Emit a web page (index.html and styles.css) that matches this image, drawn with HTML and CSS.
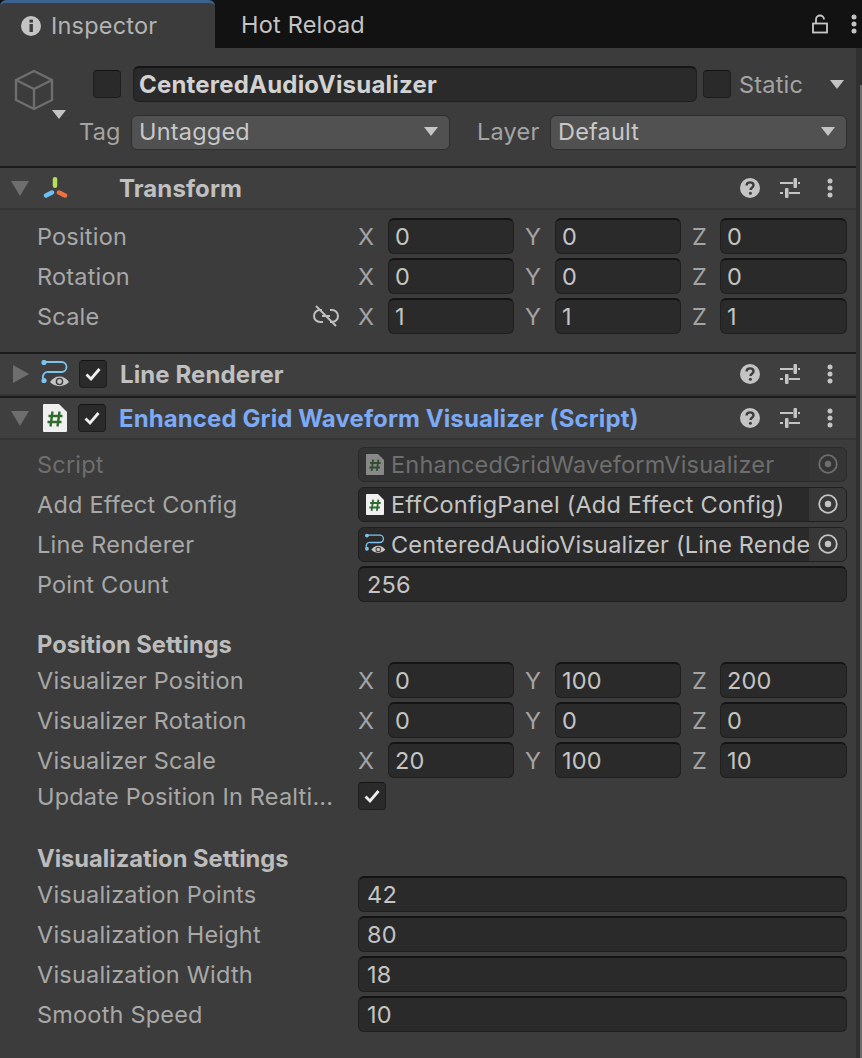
FILE: index.html
```html
<!DOCTYPE html>
<html lang="en">
<head>
  <meta charset="UTF-8" />
  <meta name="viewport" content="width=device-width, initial-scale=1.0" />
  <title>Inspector</title>
  <link rel="stylesheet" href="styles.css">
</head>
<body>
  <svg class="defs" width="0" height="0">
    <symbol id="help" viewBox="0 0 20 20">
      <circle cx="10" cy="10" r="10" fill="#c4c4c4"/>
      <path d="M6.600 7.600c0-2 1.500-3.200 3.500-3.200s3.400 1.100 3.400 2.900c0 2.500-3 2.500-3 4.700" fill="none" stroke="#3e3e3e" stroke-width="2.400"/>
      <circle cx="10.400" cy="15.200" r="1.500" fill="#3e3e3e"/>
    </symbol>
    <symbol id="sliders" viewBox="0 0 20 20">
      <path d="M0 5h13M18 5h2M0 15h3M9 15h11" stroke="#c4c4c4" stroke-width="2" fill="none"/>
      <rect x="13.500" y="0" width="3.500" height="10" rx="1" fill="#c4c4c4"/>
      <rect x="5" y="10" width="3.500" height="10" rx="1" fill="#c4c4c4"/>
    </symbol>
    <symbol id="dots" viewBox="0 0 6 20">
      <circle cx="3" cy="3" r="2.500" fill="#c4c4c4"/>
      <circle cx="3" cy="10" r="2.500" fill="#c4c4c4"/>
      <circle cx="3" cy="17" r="2.500" fill="#c4c4c4"/>
    </symbol>
    <symbol id="check" viewBox="0 0 16 14">
      <path d="M1.500 7.500l4.500 4.500 8.500-10" fill="none" stroke="#eee" stroke-width="2.800"/>
    </symbol>
    <symbol id="target" viewBox="0 0 20 20">
      <circle cx="10" cy="10" r="8.800" fill="none" stroke="currentColor" stroke-width="1.800"/>
      <circle cx="10" cy="10" r="3.200" fill="currentColor"/>
    </symbol>
    <symbol id="line" viewBox="0 0 30 28">
      <path d="M4 2h17.500a5 5 0 0 1 0 10H9a5 5 0 0 0-5 8" fill="none" stroke="#7cc4ee" stroke-width="1.800"/>
      <circle cx="4" cy="2.500" r="2.600" fill="#7cc4ee"/>
      <circle cx="4" cy="20.500" r="2.600" fill="#7cc4ee"/>
      <path d="M10 22c4.500-7.500 14.500-7.500 19 0-4.500 5.500-14.500 5.500-19 0z" fill="#c4c4c4"/>
      <circle cx="19.500" cy="21.500" r="3.800" fill="#3e3e3e"/>
      <circle cx="19.500" cy="21.500" r="2.400" fill="#c4c4c4"/>
    </symbol>
    <symbol id="script" viewBox="0 0 24 28">
      <path d="M1 0h15l8 8v19a1 1 0 0 1-1 1H1a1 1 0 0 1-1-1V1a1 1 0 0 1 1-1z" fill="#f0f0f0"/>
      <path d="M9.500 7.500l-2 15M16.500 7.500l-2 15M5.500 12h14M4.500 18h14" fill="none" stroke="#2f6b2f" stroke-width="2.400"/>
    </symbol>
  </svg>

  <div class="tabbar">
    <div class="tab active">
      <svg class="tab-info" viewBox="0 0 20 20">
        <circle cx="10" cy="10" r="10" fill="#c4c4c4"/>
        <rect x="8.500" y="8" width="3.400" height="8" fill="#3c3c3c"/>
        <rect x="8.500" y="3.600" width="3.400" height="3" fill="#3c3c3c"/>
      </svg>
      Inspector
    </div>
    <div class="tab">Hot Reload</div>
    <div class="tab-actions">
      <svg class="lock" viewBox="0 0 16 20">
        <rect x="1" y="9.500" width="14" height="9" fill="none" stroke="#c8c8c8" stroke-width="1.800"/>
        <path d="M4 9.500V5.500a4 4 0 0 1 8 0" fill="none" stroke="#c8c8c8" stroke-width="1.800"/>
      </svg>
      <svg class="dots-icon"><use href="#dots"/></svg>
    </div>
  </div>

  <div class="panel">
    <div class="scroll-thumb"></div>
    <div class="object-head">
      <div class="object-icon">
        <svg class="cube" viewBox="0 0 40 42">
          <path d="M20 2L38 11V31L20 40L2 31V11zM2 11L20 20L38 11M20 20V40" fill="none" stroke="#6e6e6e" stroke-width="2.400" stroke-linejoin="round"/>
        </svg>
        <span class="arrow-down light small-arrow"></span>
      </div>
      <div class="object-rows">
        <div class="name-row">
          <span class="checkbox"></span>
          <div class="name-field">CenteredAudioVisualizer</div>
          <span class="checkbox"></span>
          <span class="static-label">Static</span>
          <span class="arrow-down light"></span>
        </div>
        <div class="tag-row">
          <span class="tag-label">Tag</span>
          <div class="dropdown tag-drop">Untagged<span class="arrow-down light"></span></div>
          <span class="layer-label">Layer</span>
          <div class="dropdown layer-drop">Default<span class="arrow-down light"></span></div>
        </div>
      </div>
    </div>

    <div class="comp-header first">
      <span class="arrow-down fold"></span>
      <svg class="comp-icon" viewBox="0 0 28 28">
        <path d="M15 5.300v6.400" stroke="#b4e05a" stroke-width="4.500" stroke-linecap="round"/>
        <path d="M6 21.500l6-3" stroke="#6cc0f5" stroke-width="4.500" stroke-linecap="round"/>
        <path d="M19 18.500l6 3" stroke="#ec7040" stroke-width="4.500" stroke-linecap="round"/>
      </svg>
      <span class="comp-title transform-title">Transform</span>
      <div class="comp-tools">
        <svg class="tool"><use href="#help"/></svg>
        <svg class="tool"><use href="#sliders"/></svg>
        <svg class="tool-dots"><use href="#dots"/></svg>
      </div>
    </div>
    <div class="comp-body transform-body">
      <div class="row"><span class="label">Position</span>
        <div class="vec"><span>X</span><div class="field">0</div><span>Y</span><div class="field">0</div><span>Z</span><div class="field">0</div></div>
      </div>
      <div class="row"><span class="label">Rotation</span>
        <div class="vec"><span>X</span><div class="field">0</div><span>Y</span><div class="field">0</div><span>Z</span><div class="field">0</div></div>
      </div>
      <div class="row"><span class="label">Scale</span>
        <svg class="unlink" viewBox="0 0 26 22">
          <path d="M9 5H7a6 6 0 0 0 0 12h3M17 5h2a6 6 0 0 1 0 12h-2M9 11h8" fill="none" stroke="#c0c0c0" stroke-width="2"/>
          <path d="M3 1l20 20" stroke="#c0c0c0" stroke-width="2"/>
        </svg>
        <div class="vec"><span>X</span><div class="field">1</div><span>Y</span><div class="field">1</div><span>Z</span><div class="field">1</div></div>
      </div>
    </div>

    <div class="comp-header">
      <span class="arrow-right fold"></span>
      <svg class="comp-icon line-icon"><use href="#line"/></svg>
      <span class="checkbox checked"><svg class="tick"><use href="#check"/></svg></span>
      <span class="comp-title">Line Renderer</span>
      <div class="comp-tools">
        <svg class="tool"><use href="#help"/></svg>
        <svg class="tool"><use href="#sliders"/></svg>
        <svg class="tool-dots"><use href="#dots"/></svg>
      </div>
    </div>

    <div class="comp-header">
      <span class="arrow-down fold"></span>
      <svg class="comp-icon script-icon"><use href="#script"/></svg>
      <span class="checkbox checked"><svg class="tick"><use href="#check"/></svg></span>
      <span class="comp-title blue">Enhanced Grid Waveform Visualizer (Script)</span>
      <div class="comp-tools">
        <svg class="tool"><use href="#help"/></svg>
        <svg class="tool"><use href="#sliders"/></svg>
        <svg class="tool-dots"><use href="#dots"/></svg>
      </div>
    </div>

    <div class="comp-body script-body">
      <div class="row disabled"><span class="label">Script</span>
        <div class="field objfield">
          <svg class="obj-icon dim"><use href="#script"/></svg>
          <span class="obj-text">EnhancedGridWaveformVisualizer</span>
          <span class="picker"><svg class="target"><use href="#target"/></svg></span>
        </div>
      </div>
      <div class="row"><span class="label">Add Effect Config</span>
        <div class="field objfield">
          <svg class="obj-icon"><use href="#script"/></svg>
          <span class="obj-text">EffConfigPanel (Add Effect Config)</span>
          <span class="picker"><svg class="target"><use href="#target"/></svg></span>
        </div>
      </div>
      <div class="row"><span class="label">Line Renderer</span>
        <div class="field objfield">
          <svg class="obj-icon wide"><use href="#line"/></svg>
          <span class="obj-text">CenteredAudioVisualizer (Line Renderer)</span>
          <span class="picker"><svg class="target"><use href="#target"/></svg></span>
        </div>
      </div>
      <div class="row"><span class="label">Point Count</span><div class="field wide-field">256</div></div>

      <div class="section-title">Position Settings</div>
      <div class="row"><span class="label">Visualizer Position</span>
        <div class="vec"><span>X</span><div class="field">0</div><span>Y</span><div class="field">100</div><span>Z</span><div class="field">200</div></div>
      </div>
      <div class="row"><span class="label">Visualizer Rotation</span>
        <div class="vec"><span>X</span><div class="field">0</div><span>Y</span><div class="field">0</div><span>Z</span><div class="field">0</div></div>
      </div>
      <div class="row"><span class="label">Visualizer Scale</span>
        <div class="vec"><span>X</span><div class="field">20</div><span>Y</span><div class="field">100</div><span>Z</span><div class="field">10</div></div>
      </div>
      <div class="row check-row"><span class="label">Update Position In Realti...</span>
        <span class="checkbox checked"><svg class="tick"><use href="#check"/></svg></span>
      </div>

      <div class="section-title second">Visualization Settings</div>
      <div class="row"><span class="label">Visualization Points</span><div class="field wide-field">42</div></div>
      <div class="row"><span class="label">Visualization Height</span><div class="field wide-field">80</div></div>
      <div class="row"><span class="label">Visualization Width</span><div class="field wide-field">18</div></div>
      <div class="row"><span class="label">Smooth Speed</span><div class="field wide-field">10</div></div>
    </div>
  </div>
</body>
</html>
```

FILE: styles.css
```css
* {
  box-sizing: border-box;
}
html, body {
  height: 100%;
}
body {
  margin: 0;
  background: #3c3c3c;
  color: #b4b4b4;
  font-family: Inter, "Noto Sans", sans-serif;
  font-size: 23.5px;
  letter-spacing: 0.2px;
  overflow: hidden;
}
.defs {
  position: absolute;
}

/* tabs */
.tabbar {
  height: 48px;
  background: #121212;
  display: flex;
}
.tab {
  width: 215px;
  display: flex;
  align-items: center;
  padding: 1px 0 0 26px;
  color: #c4c4c4;
}
.tab.active {
  padding: 0 0 0 21px;
  background: #3c3c3c;
  border-top: 3px solid #3a6190;
  border-radius: 6px 6px 0 0;
  color: #b4b4b4;
}
.tab-info {
  width: 20px;
  height: 20px;
  margin-right: 10px;
}
.tab-actions {
  margin-left: auto;
  display: flex;
  align-items: center;
  padding-right: 5px;
}
.lock {
  width: 16px;
  height: 20px;
  margin-right: 23px;
}
.dots-icon {
  width: 6px;
  height: 20px;
}

/* panel */
.panel {
  border-right: 6px solid #303030;
  height: 1010px;
  position: relative;
}
.scroll-thumb {
  position: absolute;
  right: -6px;
  top: 37px;
  bottom: 0;
  width: 2px;
  background: #6c6c6c;
}
.object-head {
  height: 118px;
  display: flex;
}
.object-icon {
  width: 78px;
  padding: 21px 0 0 14px;
  position: relative;
}
.cube {
  width: 40px;
  height: 42px;
  display: block;
}
.small-arrow {
  position: absolute;
  left: 52px;
  top: 62px;
}
.object-rows {
  flex: 1;
  padding: 18px 0 0 15px;
}
.name-row {
  display: flex;
  align-items: center;
  height: 36px;
}
.name-field {
  width: 564px;
  height: 36px;
  margin: 0 6px 0 12px;
  padding-left: 5px;
  line-height: 34px;
  background: #2a2a2a;
  border: 1px solid #1e1e1e;
  border-top: 2px solid #141414;
  border-radius: 6px;
  font-size: 24px;
  font-weight: 700;
  color: #d2d2d2;
}
.static-label {
  margin-left: 8px;
  width: 91px;
  color: #a4a4a4;
}
.tag-row {
  display: flex;
  align-items: center;
  height: 36px;
  margin-top: 12px;
  margin-left: -14px;
}
.tag-label, .layer-label {
  color: #a4a4a4;
}
.tag-label {
  width: 52px;
  padding-bottom: 1px;
}
.layer-label {
  margin-left: 27px;
  width: 73px;
  padding-bottom: 1px;
}
.dropdown {
  height: 35px;
  display: flex;
  align-items: center;
  justify-content: space-between;
  padding: 0 11px 2px 7px;
  background: #515151;
  border: 1px solid #2e2e2e;
  border-radius: 6px;
  color: #c8c8c8;
}
.tag-drop {
  width: 319px;
}
.layer-drop {
  width: 297px;
}
.arrow-down, .arrow-right {
  display: inline-block;
  width: 0;
  height: 0;
}
.arrow-down {
  border-left: 9px solid transparent;
  border-right: 9px solid transparent;
  border-top: 15px solid #6e6e6e;
}
.arrow-down.light {
  border-left-width: 7px;
  border-right-width: 7px;
  border-top-width: 9px;
  border-top-color: #c4c4c4;
}
.arrow-right {
  border-top: 9px solid transparent;
  border-bottom: 9px solid transparent;
  border-left: 16px solid #6e6e6e;
}

/* component headers */
.comp-header {
  height: 44px;
  display: flex;
  align-items: center;
  background: #3f3f3f;
  border-top: 2px solid #1c1c1c;
  border-bottom: 2px solid #353535;
  padding-left: 11px;
  position: relative;
}
.fold {
  margin-right: 11px;
}
.arrow-right.fold {
  margin-left: 2px;
}
.comp-icon {
  width: 28px;
  height: 28px;
  margin-right: 11px;
}
.line-icon {
  width: 30px;
  margin-right: 9px;
}
.transform-title {
  margin-left: 40px;
}
.comp-title {
  font-weight: 700;
  color: #c0c0c0;
  font-size: 24px;
  letter-spacing: 0.1px;
}
.comp-title.blue {
  color: #7caaf5;
}
.comp-tools {
  position: absolute;
  right: 23px;
  top: 10px;
  display: flex;
  align-items: center;
  gap: 20px;
}
.tool {
  width: 20px;
  height: 20px;
}
.tool-dots {
  width: 6px;
  height: 20px;
  margin-left: 7px;
}
.script-icon {
  width: 24px;
  margin-left: 3px;
}
.checkbox {
  width: 28px;
  height: 28px;
  flex: none;
  background: #2a2a2a;
  border: 1px solid #1e1e1e;
  border-top: 1px solid #141414;
  border-radius: 4px;
  display: inline-flex;
  align-items: center;
  justify-content: center;
}
.checked {
  margin-right: 13px;
}
.tick {
  width: 16px;
  height: 14px;
}

/* rows */
.comp-body {
  padding-left: 37px;
  padding-right: 9px;
}
.transform-body {
  padding-top: 6px;
  padding-bottom: 16px;
}
.script-body {
  padding-top: 4px;
}
.row {
  height: 40px;
  display: flex;
  align-items: center;
  position: relative;
}
.label {
  width: 321px;
  flex: none;
  white-space: nowrap;
  color: #a8a8a8;
}
.unlink {
  position: absolute;
  left: 276px;
  top: 9px;
  width: 26px;
  height: 22px;
}
.vec {
  flex: 1;
  display: grid;
  grid-template-columns: 30px 126px 41px 126px 39px 127px;
  align-items: center;
  color: #a4a4a4;
}
.vec span + .field + span {
  padding-left: 11px;
}
.field {
  height: 36px;
  line-height: 34px;
  padding-left: 6px;
  background: #2a2a2a;
  border: 1px solid #1f1f1f;
  border-top: 2px solid #141414;
  border-radius: 6px;
  color: #c4c4c4;
}
.wide-field {
  flex: 1;
  padding-left: 8px;
}
.objfield {
  flex: 1;
  display: flex;
  align-items: center;
  height: 35px;
  padding-left: 7px;
  overflow: hidden;
  border-top: 1px solid #1f1f1f;
}
.obj-icon {
  width: 18px;
  height: 21px;
  flex: none;
  margin-right: 7px;
}
.obj-icon.wide {
  width: 22px;
  height: 22px;
  margin-left: -2px;
  margin-right: 5px;
}
.obj-text {
  flex: 1;
  min-width: 0;
  overflow: hidden;
  white-space: nowrap;
  padding-top: 2px;
}
.picker {
  width: 37px;
  height: 33px;
  flex: none;
  background: #383838;
  display: flex;
  align-items: center;
  justify-content: center;
  color: #c4c4c4;
}
.target {
  width: 20px;
  height: 20px;
}
.disabled .label, .disabled .obj-text {
  color: #6e6e6e;
}
.disabled .objfield {
  background: #333;
  border-color: #2a2a2a;
}
.disabled .picker {
  background: #353535;
  color: #6e6e6e;
}
.dim {
  opacity: 0.45;
}
.section-title {
  height: 31px;
  line-height: 31px;
  margin-top: 25px;
  font-weight: 700;
  color: #bcbcbc;
  font-size: 23.7px;
  letter-spacing: 0;
}
.section-title.second {
  margin-top: 31px;
}
.check-row {
  height: 32px;
}
.check-row .checked {
  margin-right: 0;
}
```
